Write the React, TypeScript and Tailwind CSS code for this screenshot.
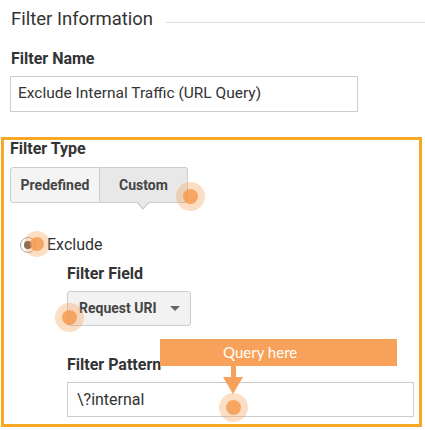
import React from 'react';

const Dot = ({ x, y, halo = 29, core = 15 }: { x: number; y: number; halo?: number; core?: number }) => (
  <div
    className="absolute flex items-center justify-center rounded-full bg-[rgba(247,160,90,0.35)]"
    style={{ left: x - halo / 2, top: y - halo / 2, width: halo, height: halo }}
  >
    <div className="rounded-full bg-[rgba(244,150,72,0.8)]" style={{ width: core, height: core }} />
  </div>
);

const Label = ({ children, className = '' }: { children: React.ReactNode; className?: string }) => (
  <div className={`text-[16px] font-bold leading-5 text-[#333] ${className}`}>{children}</div>
);

export default function App() {
  return (
    <div className="relative h-[430px] w-[425px] overflow-hidden bg-white font-['Roboto',sans-serif] text-[#333]">
      <div className="flex items-center pl-[11px] pt-[7px]">
        <span className="text-[18.5px] leading-6 text-[#333]">Filter Information</span>
        <div className="ml-[13px] mt-[7px] h-px flex-1 bg-[#dedede]" />
      </div>

      <Label className="ml-[11px] mt-[18px]">Filter Name</Label>
      <div className="ml-[10px] mt-[7px] flex h-[36px] w-[348px] items-center border border-[#ccc] px-[7px] text-[15.5px] text-[#333]">
        Exclude Internal Traffic (URL Query)
      </div>

      <div className="ml-px mt-[25px] h-[290px] w-[421px] border-[3px] border-[#f8a824] pl-[6px]">
        <Label className="leading-[18px]">Filter Type</Label>
        <div className="relative mt-[9px] flex h-[36px] w-[178px] text-[14px] font-bold text-[#444]">
          <div className="flex w-[90px] items-center justify-center rounded-l-[3px] border border-[#ccc] bg-[#f4f4f4]">
            Predefined
          </div>
          <div className="flex flex-1 items-center justify-center rounded-r-[3px] border border-l-0 border-[#ccc] bg-[#e8e8e8]">
            Custom
          </div>
          <div className="absolute left-[126px] top-[35px] h-0 w-0 border-x-[7px] border-t-[8px] border-x-transparent border-t-[#ccc]" />
          <div className="absolute left-[127px] top-[34px] h-0 w-0 border-x-[6px] border-t-[7px] border-x-transparent border-t-[#e8e8e8]" />
        </div>

        <div className="ml-[10px] mt-[32px] flex items-center">
          <div className="flex h-[16px] w-[16px] items-center justify-center rounded-full border border-[#aaa] bg-white">
            <div className="h-[8px] w-[8px] rounded-full bg-[#555]" />
          </div>
          <span className="ml-[11px] text-[16px] leading-5 text-[#333]">Exclude</span>
        </div>

        <div className="ml-[57px]">
          <Label className="mt-[9px]">Filter Field</Label>
          <div className="mt-[7px] flex h-[35px] w-[124px] items-center justify-between rounded-[3px] border border-[#ccc] bg-[#f2f2f2] pl-[11px] pr-[10px] text-[14px] font-bold text-[#444]">
            Request URI
            <div className="h-0 w-0 border-x-[5px] border-t-[5px] border-x-transparent border-t-[#666]" />
          </div>
          <Label className="mt-[29px]">Filter Pattern</Label>
          <div className="mt-[7px] flex h-[35px] w-[347px] items-center border border-[#ccc] px-[9px] text-[16px] text-[#333]">
            \?internal
          </div>
        </div>
      </div>

      <Dot x={190} y={196} />
      <Dot x={37} y={244} halo={26} core={14} />
      <Dot x={69} y={317} />
      <Dot x={233} y={407} />

      <div className="absolute left-[160px] top-[339px] flex h-[27px] w-[237px] items-center bg-[#f7a15a] pl-[63px] font-['Lato',sans-serif] text-[15px] text-white">
        Query here
      </div>
      <div className="absolute left-[231px] top-[366px] h-[12px] w-[5px] bg-[#f7a15a]" />
      <div className="absolute left-[223px] top-[377px] h-0 w-0 border-x-[10px] border-t-[17px] border-x-transparent border-t-[#f7a15a]" />
    </div>
  );
}
